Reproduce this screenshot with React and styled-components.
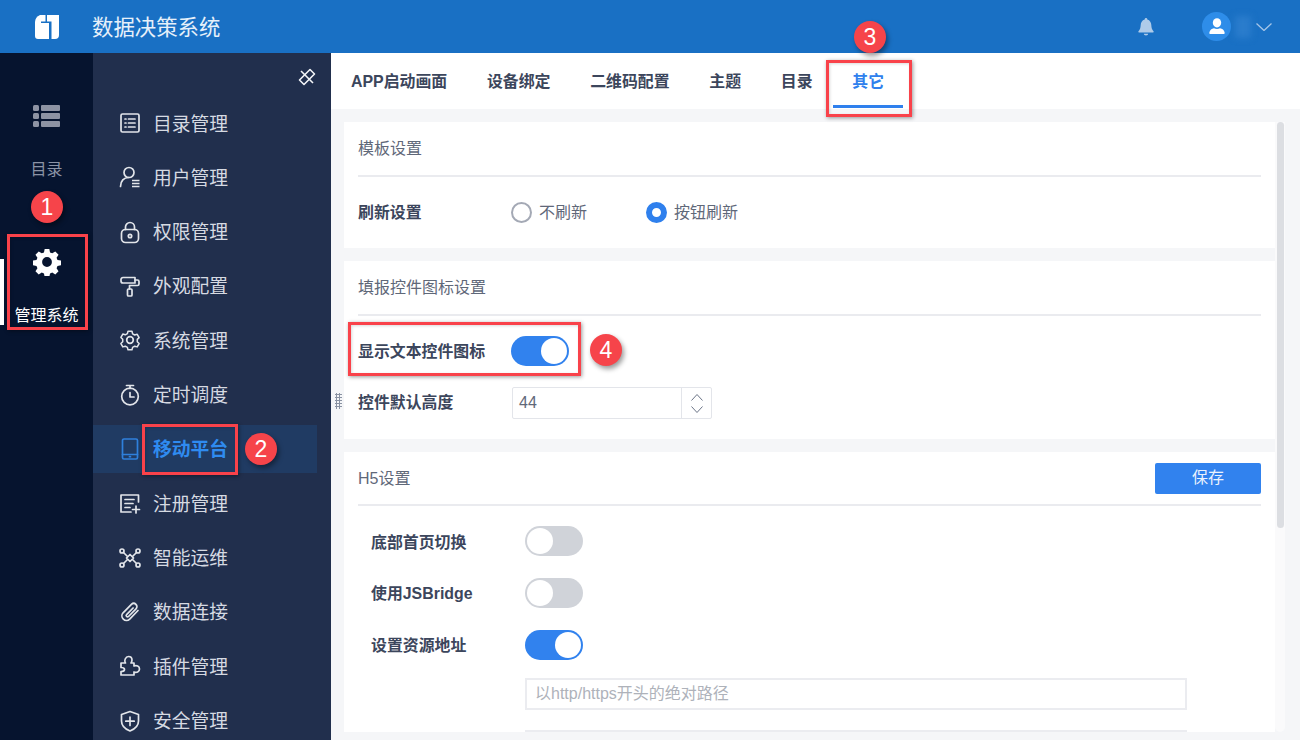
import React from 'react';
import styled, { createGlobalStyle } from 'styled-components';

const Global = createGlobalStyle`
  html, body { margin: 0; padding: 0; height: 740px; overflow: hidden; background: #f5f6f8; }
  body { font-family: "Liberation Sans", "Noto Sans CJK SC", sans-serif; }
  #root { height: 740px; }
  * { box-sizing: border-box; }
`;

const Page = styled.div`
  position: relative;
  width: 1300px;
  height: 740px;
  display: flex;
  flex-direction: column;
  overflow: hidden;
`;

const Header = styled.header`
  flex: 0 0 53px;
  background: #1970c4;
  display: flex;
  align-items: center;
  padding: 0 28px 0 35px;
  color: #e8f1fa;
`;
const Title = styled.h1`
  margin: 0 0 0 33px;
  padding-bottom: 3px;
  font-size: 21.4px;
  font-weight: 400;
  color: #e6f0fa;
  flex: 1;
`;
const BellWrap = styled.div`
  width: 18px;
  height: 20px;
  margin-right: 47px;
  display: flex;
`;
const Avatar = styled.div`
  width: 29px;
  height: 29px;
  border-radius: 50%;
  background: #2e8de9;
  display: flex;
  align-items: center;
  justify-content: center;
`;
const BlurName = styled.div`
  width: 16px;
  height: 22px;
  margin: 0 5px 0 4px;
  background: #2a7ccc;
  filter: blur(3px);
`;
const Body = styled.div`
  flex: 1;
  min-height: 0;
  display: flex;
`;
const Rail = styled.nav`
  position: relative;
  flex: 0 0 93px;
  background: #06142f;
  display: flex;
  flex-direction: column;
  align-items: center;
  padding-top: 51px;
`;
const RailLabel = styled.div`
  font-size: 16px;
  line-height: 24px;
  color: ${p => (p.$active ? '#ffffff' : '#8b93a5')};
  margin-top: ${p => p.$mt}px;
`;
const RailGap = styled.div`
  height: 66px;
`;
const RailMark = styled.div`
  position: absolute;
  left: 0;
  top: 206px;
  width: 4px;
  height: 66px;
  background: #ffffff;
`;
const Menu = styled.nav`
  position: relative;
  flex: 0 0 238px;
  background: #212f4d;
  padding-top: 46px;
  display: flex;
  flex-direction: column;
  gap: 6.33px;
  overflow: hidden;
`;
const PinBtn = styled.div`
  position: absolute;
  right: 15px;
  top: 15px;
  width: 18px;
  height: 18px;
  display: flex;
`;
const MenuItem = styled.div`
  flex: 0 0 48px;
  width: 224px;
  display: flex;
  align-items: center;
  gap: 11px;
  padding-left: 25px;
  font-size: 18.8px;
  background: ${p => (p.$active ? '#203b63' : 'transparent')};
  color: ${p => (p.$active ? '#2f8bf0' : '#d6dae2')};
  font-weight: ${p => (p.$active ? 700 : 400)};
`;
const MenuText = styled.span`
  margin-bottom: 2px;
`;
const IconBox = styled.span`
  width: 24px;
  height: 24px;
  display: flex;
  color: ${p => (p.$active ? '#2f80dc' : '#e2e5ea')};
`;
const Main = styled.main`
  position: relative;
  flex: 1;
  min-width: 0;
  display: flex;
  flex-direction: column;
`;
const Tabs = styled.div`
  flex: 0 0 56px;
  background: #fff;
  display: flex;
  align-items: stretch;
  padding-left: 20px;
  gap: 39.7px;
`;
const Tab = styled.div`
  position: relative;
  display: flex;
  align-items: center;
  height: 56px;
  padding-bottom: 2px;
  font-size: 15.9px;
  font-weight: 700;
  color: ${p => (p.$active ? '#2f80ed' : '#3c465c')};
  ${p => p.$active && `
    &::after {
      content: '';
      position: absolute;
      left: -19px;
      right: -19px;
      bottom: 1px;
      height: 3px;
      background: #2f80ed;
    }
  `}
`;
const Content = styled.div`
  flex: 1;
  min-height: 0;
  background: #f5f6f8;
  display: flex;
  padding: 13px 15px 8px 13px;
  overflow: hidden;
`;
const Cards = styled.div`
  flex: 1;
  min-width: 0;
  display: flex;
  flex-direction: column;
  gap: 13px;
`;
const Card = styled.section`
  background: #fff;
  padding: 0 14px ${p => p.$pb}px;
  flex: ${p => (p.$grow ? '1' : '0 0 auto')};
  overflow: hidden;
`;
const CardHead = styled.div`
  height: ${p => p.$h || 55}px;
  display: flex;
  align-items: center;
  justify-content: space-between;
  border-bottom: 2px solid #eaebef;
  font-size: 16px;
  color: #5f6879;
  padding-bottom: 3px;
`;
const SaveBtn = styled.button`
  width: 106px;
  height: 31px;
  margin-top: 4px;
  padding: 0 0 5px;
  border: none;
  background: #3182ee;
  color: #eaf2fd;
  font: inherit;
  font-size: 16px;
  border-radius: 2px;
`;
const Row = styled.div`
  display: flex;
  align-items: center;
  height: 36px;
  margin-top: ${p => p.$mt}px;
  padding-left: ${p => p.$indent || 0}px;
`;
const Label = styled.div`
  width: ${p => p.$w || 153}px;
  font-size: 15.9px;
  font-weight: 700;
  color: #3c465c;
  padding-bottom: ${p => p.$lift ?? 2}px;
`;
const Radio = styled.span`
  width: 21px;
  height: 21px;
  border-radius: 50%;
  border: ${p => (p.$on ? '6px solid #2f80ed' : '2px solid #a4a9b5')};
  background: #fff;
  margin-right: 7px;
`;
const RadioText = styled.span`
  font-size: 16px;
  color: #5f6879;
  margin-right: ${p => p.$mr}px;
  padding-bottom: 2px;
`;
const Toggle = styled.span`
  position: relative;
  display: block;
  width: 58px;
  height: 30px;
  border-radius: 15px;
  background: ${p => (p.$on ? '#3182ee' : '#d0d3d9')};
  &::after {
    content: '';
    position: absolute;
    top: 2px;
    ${p => (p.$on ? 'right: 2px;' : 'left: 2px;')}
    width: 26px;
    height: 26px;
    border-radius: 50%;
    background: #fff;
  }
`;
const Stepper = styled.div`
  width: 200px;
  height: 32px;
  margin-left: 1px;
  border: 1px solid #e3e5ea;
  border-radius: 2px;
  display: flex;
`;
const StepValue = styled.div`
  flex: 1;
  padding-left: 6px;
  font-size: 16px;
  line-height: 30px;
  color: #5f6879;
  border-right: 1px solid #e3e5ea;
`;
const StepArrows = styled.div`
  flex: 0 0 29px;
  display: flex;
  flex-direction: column;
  align-items: center;
  justify-content: center;
  gap: 5px;
  color: #5f6879;
`;
const FieldRow = styled.div`
  margin: ${p => p.$mt}px 0 0 167px;
  width: 662px;
  height: 32px;
  border: 2px solid #ebecf0;
  padding-left: 8px;
  font-size: 16px;
  line-height: 27px;
  color: #aeb2ba;
`;
const Scroll = styled.div`
  flex: 0 0 10px;
  background: #fafafb;
  border-radius: 0 0 5px 5px;
  display: flex;
  justify-content: center;
`;
const Thumb = styled.div`
  width: 7px;
  height: 406px;
  border-radius: 4px;
  background: #dcdee2;
`;
const DragHandle = styled.div`
  position: absolute;
  left: 4px;
  top: 340px;
  width: 7px;
  height: 16px;
  background-image: radial-gradient(circle, #8a93a3 1px, transparent 1.2px);
  background-size: 3px 3px;
`;
const RedBox = styled.div`
  position: absolute;
  left: ${p => p.$x}px;
  top: ${p => p.$y}px;
  width: ${p => p.$w}px;
  height: ${p => p.$h}px;
  border: 3px solid #f9424a;
  box-shadow: 1px 1px 4px rgba(0, 0, 0, 0.4), inset 1px 1px 3px rgba(0, 0, 0, 0.15);
  pointer-events: none;
`;
const Badge = styled.div`
  position: absolute;
  left: ${p => p.$x - 16}px;
  top: ${p => p.$y - 16}px;
  width: 32px;
  height: 32px;
  border-radius: 50%;
  background: #f6444a;
  color: #fff;
  font-size: 23px;
  line-height: 32px;
  text-align: center;
  box-shadow: 2px 3px 5px rgba(0, 0, 0, 0.4);
`;

const S = { fill: 'none', stroke: 'currentColor', strokeWidth: 1.7, strokeLinecap: 'round', strokeLinejoin: 'round' };
const Ico = ({ children }) => (
  <svg width="24" height="24" viewBox="0 0 24 24" {...S}>{children}</svg>
);

const icons = {
  list: <Ico><rect x="3" y="3" width="18" height="18" rx="1.500" /><path d="M7 8h1M7 12h1M7 16h1M10.500 8H17M10.500 12H17M10.500 16H17" /></Ico>,
  user: <Ico><circle cx="11" cy="7.500" r="5" /><path d="M2.500 21.500c0-5.500 3.500-9 8-9" /><path d="M14 15.500h7.500M14 18.500h7.500M14 21.500h7.500" strokeLinecap="butt" /></Ico>,
  lock: <Ico><rect x="3.500" y="9.500" width="17" height="13" rx="4" /><path d="M7.500 9.500V7a4.500 4.500 0 0 1 9 0v2.500" /><circle cx="12" cy="16" r="1.700" /></Ico>,
  roller: <Ico><path d="M5 3.500h12v5.500H5a2 2 0 0 1-2-2V5.500a2 2 0 0 1 2-2z" /><path d="M17 6h2.500A1.500 1.500 0 0 1 21 7.500V10a1.500 1.500 0 0 1-1.500 1.500H11.500V15" /><rect x="9.500" y="15" width="4.500" height="7" rx="1" /></Ico>,
  gear: <Ico><path d="M9.800 3h4.400l.7 2.800 2.300 1.300 2.800-.8 2.100 3.700-2 2v2.600l2 2-2.100 3.700-2.800-.8-2.300 1.300-.7 2.800H9.800l-.7-2.800-2.300-1.300-2.800.8-2.100-3.700 2-2V11.800l-2-2L4 6.100l2.800.8 2.300-1.300z" transform="translate(1.200 .6) scale(.9)" /><circle cx="12" cy="12" r="3.300" /></Ico>,
  timer: <Ico><circle cx="12" cy="13.500" r="8.300" /><path d="M8.500 2.500h7M12 2.500v3M12 9.500v4.500h4" /></Ico>,
  tablet: <Ico><rect x="4.500" y="2" width="15" height="20" rx="1.500" /><path d="M4.500 17.500h15" /><path d="M11.500 19.700h1" /></Ico>,
  register: <Ico><path d="M20.500 11V4H3v17h10" /><path d="M7 8.500h9M7 12.500h8M7 16.500h5" /><path d="M18 15v7M14.500 18.500h7" /></Ico>,
  net: <Ico><circle cx="4" cy="5" r="2" /><circle cx="20" cy="5" r="2" /><circle cx="4" cy="19" r="2" /><circle cx="20" cy="19" r="2" /><path d="M12 8.500L15.500 12 12 15.500 8.500 12z" /><path d="M5.500 6.500l4 4M18.500 6.500l-4 4M5.500 17.500l4-4M18.500 17.500l-4-4" /></Ico>,
  clip: <Ico><path d="M20 10.500l-8.300 8.700a4.600 4.600 0 0 1-6.600-6.400l8.300-8.400a3.200 3.200 0 0 1 4.600 4.500l-7.500 7.600a1.300 1.300 0 0 1-1.900-1.900l6.500-6.600" /></Ico>,
  puzzle: <Ico><path d="M3 21V17.500C5 17.500 6.500 16.800 6.500 15.500 6.500 14.200 5 13.500 3 13.500V9H7.500C6.500 7.800 6.500 6.500 7.200 5 7.900 3.500 9 2.500 10.500 2.500 12.500 2.500 14 4 14 6 14 7.200 13.500 8.300 13 9H16V12C18.500 11 21.500 12 21.500 15 21.500 18 18.500 19 16 18V21Z" /></Ico>,
  shield: <Ico><path d="M12 2.500l8.500 3v6.500c0 4.500-3.500 8-8.500 10-5-2-8.500-5.500-8.500-10V5.500z" /><path d="M12 8v8.500M7.800 12.200h8.400" /></Ico>,
};

const menu = [
  ['list', '目录管理'], ['user', '用户管理'], ['lock', '权限管理'], ['roller', '外观配置'],
  ['gear', '系统管理'], ['timer', '定时调度'], ['tablet', '移动平台', true], ['register', '注册管理'],
  ['net', '智能运维'], ['clip', '数据连接'], ['puzzle', '插件管理'], ['shield', '安全管理'],
];
const tabs = ['APP启动画面', '设备绑定', '二维码配置', '主题', '目录'];

const Logo = () => (
  <svg width="24" height="24" viewBox="0 0 24 24">
    <path fill="#fff" d="M5 0H24V20a4 4 0 0 1-4 4H3a3 3 0 0 1-3-3V7a8 8 0 0 1 5-7z" />
    <path fill="#1970c4" d="M10.500 0H12V6.500H16.500V24H14V8H6V6.500H10.500z" />
  </svg>
);

const Bell = () => (
  <svg width="16" height="18" viewBox="0 0 16 18" fill="#aecbe9" style={{ margin: 'auto' }}>
    <path d="M8 0a1.300 1.300 0 0 1 1.300 1.400C12 2.200 13.200 4.500 13.300 7c.1 3 .8 4.700 2.200 6.300.4.500.2 1.200-.5 1.200H1c-.7 0-.9-.7-.5-1.200C1.900 11.700 2.600 10 2.700 7c.1-2.500 1.300-4.800 4-5.600A1.300 1.300 0 0 1 8 0z" />
    <path d="M5.800 15.700h4.400a2.200 1.800 0 0 1-4.400 0z" />
  </svg>
);

const UserGlyph = () => (
  <svg width="16" height="17" viewBox="0 0 16 17" fill="#fff">
    <ellipse cx="8" cy="4.800" rx="4.200" ry="4.600" />
    <path d="M1.500 16c-.8 0-1.300-.5-1.200-1.300C.7 12 2.800 10.400 5 10.200c1.800.9 4.200.9 6 0 2.200.2 4.300 1.800 4.700 4.500.1.800-.4 1.300-1.200 1.300z" />
  </svg>
);

const SolidGear = () => (
  <svg width="28" height="28" viewBox="0 0 24 24" fill="#fff">
    <path fillRule="evenodd" d="M10 .8h4l.6 3 1.900.8 2.600-1.700 2.800 2.800-1.700 2.600.8 1.900 3 .6v4l-3 .6-.8 1.900 1.700 2.600-2.800 2.800-2.600-1.700-1.900.8-.6 3h-4l-.6-3-1.900-.8-2.600 1.700-2.800-2.800 1.700-2.600-.8-1.900-3-.6v-4l3-.6.8-1.900L2.100 5.700l2.800-2.800 2.600 1.700 1.900-.8zM12 7.800a4.200 4.200 0 1 0 0 8.400 4.200 4.200 0 0 0 0-8.400z" />
  </svg>
);

const RailList = () => (
  <svg width="27" height="24" viewBox="0 0 27 24" fill="#8d93a3">
    <rect x="0" y="1" width="6" height="6" rx="1.500" /><rect x="8" y="1" width="19" height="6" rx="1" />
    <rect x="0" y="9" width="6" height="6" rx="1.500" /><rect x="8" y="9" width="19" height="6" rx="1" />
    <rect x="0" y="17" width="6" height="6" rx="1.500" /><rect x="8" y="17" width="19" height="6" rx="1" />
  </svg>
);

const Pin = () => (
  <svg width="18" height="18" viewBox="0 0 18 18" fill="none" stroke="#f2f4f7" strokeWidth="1.600" strokeLinejoin="round">
    <path d="M12 1.500L16.500 6 6 16.500 1.500 12z" />
    <path d="M3 3L15 15" />
  </svg>
);

const Chevron = ({ w = 16, h = 8, color = '#a6c6e8', up, sw = 1.300 }) => (
  <svg width={w} height={h} viewBox={`0 0 ${w} ${h}`} fill="none" stroke={color} strokeWidth={sw}>
    <path d={up ? `M.5 ${h - .5}L${w / 2} .5 ${w - .5} ${h - .5}` : `M.5 .5L${w / 2} ${h - .5} ${w - .5} .5`} />
  </svg>
);

export default function App() {
  return (
    <Page>
      <Global />
      <Header>
        <Logo />
        <Title>数据决策系统</Title>
        <BellWrap><Bell /></BellWrap>
        <Avatar><UserGlyph /></Avatar>
        <BlurName />
        <Chevron />
      </Header>
      <Body>
        <Rail>
          <RailList />
          <RailLabel $mt={30}>目录</RailLabel>
          <RailGap />
          <SolidGear />
          <RailLabel $active $mt={28}>管理系统</RailLabel>
          <RailMark />
        </Rail>
        <Menu>
          <PinBtn><Pin /></PinBtn>
          {menu.map(([ic, text, active]) => (
            <MenuItem key={text} $active={active}>
              <IconBox $active={active}>{icons[ic]}</IconBox>
              <MenuText>{text}</MenuText>
            </MenuItem>
          ))}
        </Menu>
        <Main>
          <Tabs>
            {tabs.map(t => <Tab key={t}>{t}</Tab>)}
            <Tab $active>其它</Tab>
          </Tabs>
          <Content>
            <Cards>
              <Card $pb={18}>
                <CardHead>模板设置</CardHead>
                <Row $mt={17}>
                  <Label>刷新设置</Label>
                  <Radio />
                  <RadioText $mr={59}>不刷新</RadioText>
                  <Radio $on />
                  <RadioText>按钮刷新</RadioText>
                </Row>
              </Card>
              <Card $pb={18}>
                <CardHead>填报控件图标设置</CardHead>
                <Row $mt={17}>
                  <Label>显示文本控件图标</Label>
                  <Toggle $on />
                </Row>
                <Row $mt={16}>
                  <Label $lift={4}>控件默认高度</Label>
                  <Stepper>
                    <StepValue>44</StepValue>
                    <StepArrows>
                      <Chevron w={12} h={7} up color="#6b7486" sw={1} />
                      <Chevron w={12} h={7} color="#6b7486" sw={1} />
                    </StepArrows>
                  </Stepper>
                </Row>
              </Card>
              <Card $grow $pb={0}>
                <CardHead $h={54}>H5设置<SaveBtn>保存</SaveBtn></CardHead>
                <Row $mt={17} $indent={13}>
                  <Label $w={154} $lift={0}>底部首页切换</Label>
                  <Toggle />
                </Row>
                <Row $mt={15.500} $indent={13}>
                  <Label $w={154} $lift={0}>使用JSBridge</Label>
                  <Toggle />
                </Row>
                <Row $mt={16} $indent={13}>
                  <Label $w={154} $lift={0}>设置资源地址</Label>
                  <Toggle $on />
                </Row>
                <FieldRow $mt={15}>以http/https开头的绝对路径</FieldRow>
                <FieldRow $mt={20} />
              </Card>
            </Cards>
            <Scroll><Thumb /></Scroll>
          </Content>
          <DragHandle />
        </Main>
      </Body>
      <RedBox $x={7} $y={234} $w={81} $h={96} />
      <RedBox $x={142} $y={424} $w={96} $h={51} />
      <RedBox $x={826} $y={60} $w={86} $h={57} />
      <RedBox $x={348} $y={322} $w={233} $h={54} />
      <Badge $x={47} $y={207}>1</Badge>
      <Badge $x={261} $y={449}>2</Badge>
      <Badge $x={870} $y={37}>3</Badge>
      <Badge $x={606} $y={350}>4</Badge>
    </Page>
  );
}
